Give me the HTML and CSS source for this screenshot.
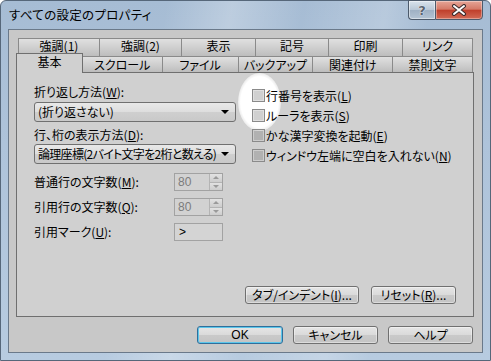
FILE: index.html
```html
<!DOCTYPE html>
<html lang="ja">
<head>
<meta charset="utf-8">
<link rel="stylesheet" href="styles.css">
</head>
<body>
<div class="window">
  <div class="titlebar">
    <div class="title">すべての設定のプロパティ</div>
    <div class="caption">
      <div class="cap help"><span>?</span></div>
      <div class="cap close">
        <svg width="16" height="12" viewBox="0 0 16 12"><path d="M3 2 L13 10 M13 2 L3 10" stroke="#3a2a2a" stroke-width="4" stroke-linecap="round"/><path d="M3 2 L13 10 M13 2 L3 10" stroke="#fff" stroke-width="2" stroke-linecap="round"/></svg>
      </div>
    </div>
  </div>
  <div class="client">
    <div class="tabs">
      <div class="tabrow back">
        <div class="tab">強調(1)</div>
        <div class="tab">強調(2)</div>
        <div class="tab">表示</div>
        <div class="tab">記号</div>
        <div class="tab">印刷</div>
        <div class="tab">リンク</div>
      </div>
      <div class="tabrow front">
        <div class="tab sel">基本</div>
        <div class="tab">スクロール</div>
        <div class="tab">ファイル</div>
        <div class="tab">バックアップ</div>
        <div class="tab">関連付け</div>
        <div class="tab">禁則文字</div>
      </div>
    </div>
    <div class="panel">
      <div class="glow"></div>
      <div class="grid">
        <div class="left">
          <div class="label l1">折り返し方法(<u>W</u>):</div>
          <div class="combo c1"><span>(折り返さない)</span><i class="arrow"></i></div>
          <div class="label l2">行、桁の表示方法(<u>D</u>):</div>
          <div class="combo c2"><span>論理座標(2バイト文字を2桁と数える)</span><i class="arrow"></i></div>
          <div class="fields">
            <div class="flabel">普通行の文字数(<u>M</u>):</div>
            <div class="spin"><span class="val">80</span><span class="btns"><b class="up"></b><b class="down"></b></span></div>
            <div class="flabel">引用行の文字数(<u>Q</u>):</div>
            <div class="spin"><span class="val">80</span><span class="btns"><b class="up"></b><b class="down"></b></span></div>
            <div class="flabel">引用マーク(<u>U</u>):</div>
            <div class="textbox">&gt;</div>
          </div>
        </div>
        <div class="right">
          <div class="check"><span class="box"></span>行番号を表示(<u>L</u>)</div>
          <div class="check"><span class="box"></span>ルーラを表示(<u>S</u>)</div>
          <div class="check"><span class="box"></span>かな漢字変換を起動(<u>E</u>)</div>
          <div class="check"><span class="box"></span>ウィンドウ左端に空白を入れない(<u>N</u>)</div>
        </div>
      </div>
      <div class="panelbtns">
        <div class="btn wtab">タブ/インデント(<u>I</u>)...</div>
        <div class="btn wreset">リセット(<u>R</u>)...</div>
      </div>
    </div>
    <div class="dlgbtns">
      <div class="btn dlg ok">OK</div>
      <div class="btn dlg">キャンセル</div>
      <div class="btn dlg">ヘルプ</div>
    </div>
  </div>
</div>
</body>
</html>
```
FILE: styles.css
```css
* { box-sizing: border-box; }
html, body { margin: 0; padding: 0; }
body {
  width: 491px; height: 361px; overflow: hidden;
  font-family: "Noto Sans CJK JP", "Noto Sans", sans-serif;
  font-size: 12px;
  font-feature-settings: "palt";
  color: #000;
}
u { text-decoration: underline; text-underline-offset: 1px; }

.window {
  width: 491px; height: 361px;
  display: flex; flex-direction: column;
  padding: 0 7px 7px 7px;
  background:
    linear-gradient(100deg, rgba(255,255,255,0) 30%, rgba(255,255,255,0.25) 42%, rgba(255,255,255,0) 55%, rgba(255,255,255,0.2) 70%, rgba(255,255,255,0) 78%),
    linear-gradient(180deg, #a6bcd4 0%, #aec3da 40%, #b7cbe0 100%);
  border: 1px solid #56677a;
  border-radius: 6px 6px 0 0;
}
.titlebar {
  height: 28px;
  display: flex; justify-content: space-between; align-items: flex-start;
  margin: 0 -7px 0 -7px;
}
.title {
  padding: 7px 0 0 8px;
  font-size: 12.5px;
  line-height: 14px;
  color: #000;
  letter-spacing: 0.3px;
}
.caption { display: flex; margin-right: 7px; margin-top: -1px; }
.cap {
  height: 20px;
  border: 1px solid #4c5a6b;
  display: flex; align-items: center; justify-content: center;
}
.help {
  width: 27px;
  border-radius: 0 0 0 4px;
  border-right: none;
  background: linear-gradient(180deg, #d9e3ec 0%, #b9c8d7 48%, #9fb1c4 52%, #b4c4d4 100%);
  box-shadow: inset 0 0 0 1px rgba(255,255,255,0.45);
}
.help span {
  font-family: "DejaVu Sans", sans-serif; font-weight: bold; font-size: 13px;
  color: #5a6470;
  text-shadow: 0 0 1px #fff, 0 0 1px #fff;
  line-height: 1;
}
.close {
  width: 48px;
  border-radius: 0 0 4px 0;
  background: linear-gradient(180deg, #e6a597 0%, #d57a68 45%, #c0402c 52%, #d26a55 100%);
  box-shadow: inset 0 0 0 1px rgba(255,255,255,0.35);
}

.client {
  flex: 1;
  background: #c8c8c8;
  border: 1px solid #6a798a;
  display: flex; flex-direction: column;
  padding: 8px 9px 0 7px;
}

.tabs { display: flex; flex-direction: column; }
.tabrow { display: flex; }
.tab {
  display: flex; align-items: center; justify-content: center;
  border: 1px solid #8a8a8a;
  border-bottom: none;
  margin-left: -1px;
  background: linear-gradient(180deg, #e0e0e0 0%, #cfcfcf 50%, #bdbdbd 100%);
  line-height: 14px;
  white-space: nowrap;
}
.tabrow .tab:first-child { margin-left: 0; }
.back { margin-left: 2px; height: 18px; }
.back .tab { height: 18px; padding-bottom: 4px; }
.back .tab:nth-child(1) { width: 82px; }
.back .tab:nth-child(2) { width: 83px; }
.back .tab:nth-child(3) { width: 75px; }
.back .tab:nth-child(4) { width: 74px; }
.back .tab:nth-child(5) { width: 75px; }
.back .tab:nth-child(6) { width: 71px; }
.front {
  margin-top: -3px; height: 19px;
  align-items: flex-end;
  position: relative; z-index: 2;
}
.front .tab { height: 16px; padding-top: 1px; }
.front .tab:nth-child(1) { width: 67px; }
.front .tab:nth-child(2) { width: 80px; margin-left: 0; border-left: none; }
.front .tab:nth-child(3) { width: 77px; }
.front .tab:nth-child(4) { width: 76px; }
.front .tab:nth-child(5) { width: 81px; }
.front .tab:nth-child(6) { width: 81px; }
.front .tab.sel {
  height: 20px; margin-bottom: -1px;
  background: #d0d0d0;
  border-color: #6f6f6f;
  padding-top: 0; padding-bottom: 4px;
}

.panel {
  position: relative;
  width: 458px; height: 245px;
  background: #d0d0d0;
  border: 1px solid #6f6f6f;
  display: flex; flex-direction: column;
  padding: 11px 17px 12px 17px;
}
.glow {
  position: absolute;
  left: 221px; top: 0px;
  width: 43px; height: 58px;
  border-radius: 50%;
  background: radial-gradient(ellipse at center, #fff 62%, rgba(255,255,255,0.6) 70%, rgba(255,255,255,0) 74%);
}
.grid {
  position: relative;
  display: grid;
  grid-template-columns: 218px 1fr;
}
.left { display: flex; flex-direction: column; }
.label { line-height: 16px; height: 16px; }
.l2 { margin-top: 5px; }
.combo {
  width: 202px; height: 20px;
  border: 1px solid #707070;
  border-radius: 3px;
  background: linear-gradient(180deg, #e8e8e8 0%, #dedede 48%, #cfcfcf 52%, #c9c9c9 100%);
  display: flex; align-items: center; justify-content: space-between;
  padding: 0 6px 0 3px;
  line-height: 14px;
  white-space: nowrap;
}
.c1 { margin-top: 2px; }
.c2 { margin-top: 1px; letter-spacing: -0.7px; }
.arrow {
  width: 0; height: 0;
  border-left: 4px solid transparent;
  border-right: 4px solid transparent;
  border-top: 4px solid #000;
}
.fields {
  margin-top: 9px;
  display: grid;
  grid-template-columns: 140px 49px;
  grid-auto-rows: 18px;
  row-gap: 7px;
  align-items: center;
}
.flabel { line-height: 16px; }
.spin, .textbox {
  height: 18px;
  border: 1px solid #a2a2a2;
  background: #d2d2d2;
  display: flex; align-items: center;
  color: #7c7c7c;
}
.spin { justify-content: space-between; }
.val { padding-left: 3px; font-family: "Liberation Sans", sans-serif; font-size: 12px; }
.btns {
  width: 13px; height: 16px;
  display: flex; flex-direction: column;
  border-left: 1px solid #b4b4b4;
}
.btns b {
  flex: 1; display: flex; align-items: center; justify-content: center;
  background: linear-gradient(180deg, #e2e2e2, #cdcdcd);
}
.btns b.up { border-bottom: 1px solid #b4b4b4; }
.btns b::after {
  content: ""; width: 0; height: 0;
  border-left: 3px solid transparent; border-right: 3px solid transparent;
}
.btns b.up::after { border-bottom: 3px solid #9a9a9a; }
.btns b.down::after { border-top: 3px solid #9a9a9a; }
.textbox { padding-left: 4px; color: #000; background: #d4d4d4; font-family: "Liberation Sans", sans-serif; }

.right { display: flex; flex-direction: column; margin-top: 1px; }
.check {
  height: 20px; display: flex; align-items: center;
  white-space: nowrap;
}
.box {
  width: 13px; height: 13px;
  margin-right: 1px;
  border: 1px solid #8a8a8a;
  background: rgba(120,120,120,0.35);
  box-shadow: inset 0 0 0 1px rgba(255,255,255,0.35);
}

.panelbtns {
  margin-top: auto;
  display: flex; justify-content: flex-end; gap: 12px;
}
.btn {
  height: 18px;
  border: 1px solid #707070;
  border-radius: 3px;
  background: linear-gradient(180deg, #e6e6e6 0%, #dadada 48%, #c9c9c9 52%, #c4c4c4 100%);
  display: flex; align-items: center; justify-content: center;
  line-height: 14px;
  white-space: nowrap;
  box-shadow: inset 0 0 0 1px rgba(255,255,255,0.4);
}
.wtab { width: 114px; }
.wreset { width: 85px; }
.dlgbtns {
  margin-top: 9px;
  display: flex; justify-content: flex-end; gap: 10px;
  padding-right: 0;
}
.dlg { width: 85px; }
.ok {
  width: 86px;
  border-color: #2f6f9c;
  box-shadow: inset 0 0 0 1px #5cc6ea;
  font-family: "Liberation Sans", sans-serif;
  font-size: 12px;
}
```
